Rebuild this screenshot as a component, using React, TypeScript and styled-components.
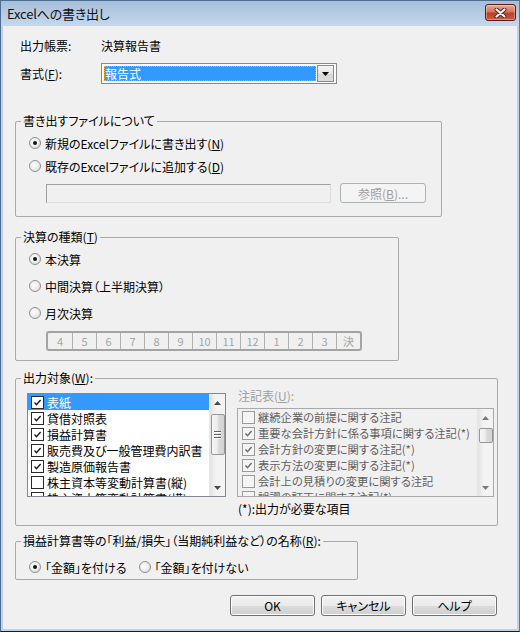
import styled, { createGlobalStyle } from "styled-components";

const GlobalStyle = createGlobalStyle`
  html, body {
    margin: 0;
    padding: 0;
    background: #fff;
  }
  body {
    font-family: "Noto Sans CJK JP", "Noto Sans", sans-serif;
    font-size: 12px;
    font-feature-settings: "palt";
    color: #000;
  }
  * {
    box-sizing: border-box;
  }
`;

const Window = styled.div`
  width: 520px;
  height: 632px;
  display: flex;
  flex-direction: column;
  background: #bcd2ea;
  border: 1px solid #4d6d92;
  border-right-color: #2a86d8;
  border-bottom-color: #0e1e30;
  padding: 0 2px 2px 2px;
`;

const TitleBar = styled.div`
  height: 25px;
  margin: 0 -2px;
  padding-left: 6px;
  display: flex;
  align-items: center;
  background: linear-gradient(#a7bed9, #c4d8ee);
`;

const TitleText = styled.span`
  font-size: 13px;
  color: #111;
  letter-spacing: -0.2px;
`;

const CloseButton = styled.div`
  width: 31px;
  height: 17px;
  margin: 3px 3px 0 auto;
  align-self: flex-start;
  border: 1px solid #5a1a14;
  border-radius: 3px;
  background: linear-gradient(#e9a898 0%, #d5735f 45%, #bf3f29 55%, #cb5a42 100%);
  box-shadow: inset 0 0 0 1px rgba(255, 255, 255, 0.35);
  display: flex;
  align-items: center;
  justify-content: center;
`;

const Content = styled.div`
  flex: 1;
  background: #f0f0f0;
  display: flex;
  flex-direction: column;
  padding: 9px 0 0 12px;
`;

const InfoRow = styled.div<{ $h: number; $gap?: number }>`
  display: grid;
  grid-template-columns: 81px auto;
  align-items: center;
  height: ${(p) => p.$h}px;
  margin-top: ${(p) => p.$gap ?? 0}px;
  padding-left: 5px;
`;

const Combo = styled.div`
  width: 236px;
  height: 21px;
  display: flex;
  gap: 1px;
  padding: 2px;
  background: #fff;
  border: 1px solid #8a8a8a;
`;

const ComboValue = styled.div`
  flex: 1;
  background: #3399ff;
  color: #fff;
  line-height: 15px;
  padding-left: 1px;
  outline: 1px dotted #f5a623;
  outline-offset: -1px;
`;

const ComboButton = styled.div`
  width: 17px;
  margin: -1px 0;
  border: 1px solid #8a8a8a;
  background: linear-gradient(#f7f7f7, #e4e4e4 50%, #d6d6d6 51%, #dcdcdc);
  display: flex;
  align-items: center;
  justify-content: center;
`;

const Group = styled.fieldset<{ $w: number; $gap: number }>`
  width: ${(p) => p.$w}px;
  margin: ${(p) => p.$gap}px 0 0 0;
  padding: 0;
  min-width: 0;
  border: 1px solid #a9a9a9;
  border-radius: 2px;
`;

const Legend = styled.legend<{ $disabled?: boolean }>`
  margin-left: 5px;
  padding: 0 2px;
  line-height: 16px;
  color: ${(p) => (p.$disabled ? "#a0a0a0" : "#000")};
`;

const GroupBody = styled.div<{ $pad: string }>`
  display: flex;
  flex-direction: column;
  padding: ${(p) => p.$pad};
`;

const RadioRow = styled.label<{ $h: number; $gap?: number }>`
  display: flex;
  align-items: center;
  gap: 4px;
  height: ${(p) => p.$h}px;
  margin-top: ${(p) => p.$gap ?? 0}px;
`;

const RadioInline = styled.div`
  display: flex;
  align-items: center;
  gap: 12px;
`;

const RadioCircle = styled.span<{ $checked?: boolean }>`
  width: 12px;
  height: 12px;
  flex: none;
  border-radius: 50%;
  border: 1px solid #8e8f8f;
  background: radial-gradient(circle at 40% 40%, #ffffff 0%, #ececec 50%, #d2d2d2 100%);
  display: flex;
  align-items: center;
  justify-content: center;
  &::after {
    content: "";
    width: 4px;
    height: 4px;
    border-radius: 50%;
    background: ${(p) => (p.$checked ? "#151515" : "transparent")};
  }
`;

const PathRow = styled.div`
  display: flex;
  align-items: center;
  gap: 9px;
  height: 20px;
  margin-top: 6px;
  padding-left: 17px;
`;

const PathInput = styled.div`
  width: 285px;
  height: 19px;
  background: #f0f0f0;
  border: 1px solid #a0a0a0;
  border-right-color: #dcdcdc;
  border-bottom-color: #dcdcdc;
`;

const PushButton = styled.button<{ $w: number; $h: number; $disabled?: boolean }>`
  width: ${(p) => p.$w}px;
  height: ${(p) => p.$h}px;
  padding: 0;
  font: inherit;
  font-feature-settings: "palt";
  border-radius: 3px;
  border: 1px solid ${(p) => (p.$disabled ? "#adb2b5" : "#707070")};
  color: ${(p) => (p.$disabled ? "#a0a0a0" : "#000")};
  background: ${(p) =>
    p.$disabled
      ? "#f4f4f4"
      : "linear-gradient(#f2f2f2 0%, #ebebeb 50%, #dddddd 51%, #cfcfcf 100%)"};
  box-shadow: inset 0 0 0 1px ${(p) => (p.$disabled ? "#f4f4f4" : "#fcfcfc")};
`;

const MonthBar = styled.div`
  display: flex;
  align-self: flex-start;
  height: 20px;
  margin: 7px 0 0 17px;
  border: 2px solid #a3a3a3;
  border-radius: 3px;
`;

const MonthCell = styled.div`
  width: 24px;
  display: flex;
  align-items: center;
  justify-content: center;
  color: #a5a5a5;
  font-size: 11px;
  & + & {
    border-left: 1px solid #b0b0b0;
  }
`;

const TargetBody = styled.div`
  display: flex;
  align-items: flex-start;
  gap: 11px;
  padding: 0 0 8px 11px;
`;

const ListBox = styled.div<{ $w: number; $h: number; $disabled?: boolean }>`
  width: ${(p) => p.$w}px;
  height: ${(p) => p.$h}px;
  display: flex;
  overflow: hidden;
  border: 1px solid ${(p) => (p.$disabled ? "#a9a9a9" : "#828790")};
  background: ${(p) => (p.$disabled ? "#f0f0f0" : "#fff")};
  font-size: ${(p) => (p.$disabled ? "11.3px" : "12px")};
`;

const ListItems = styled.div`
  flex: 1;
  min-width: 0;
  overflow: hidden;
`;

const ListItem = styled.div<{ $selected?: boolean; $disabled?: boolean; $pad: number }>`
  height: 16px;
  display: flex;
  align-items: center;
  gap: 3px;
  padding-left: ${(p) => p.$pad}px;
  white-space: nowrap;
  background: ${(p) => (p.$selected ? "#3399ff" : "transparent")};
  color: ${(p) => (p.$selected ? "#fff" : p.$disabled ? "#5f5f5f" : "#000")};
`;

const CheckBox = styled.span<{ $disabled?: boolean }>`
  width: 13px;
  height: 13px;
  flex: none;
  display: flex;
  align-items: center;
  justify-content: center;
  background: ${(p) => (p.$disabled ? "#f4f4f4" : "#fff")};
  border: 1px solid ${(p) => (p.$disabled ? "#9a9a9a" : "#2a2a2a")};
`;

const ScrollBar = styled.div`
  width: 16px;
  flex: none;
  display: flex;
  flex-direction: column;
  background: linear-gradient(to right, #e3e3e3, #f3f3f3 40%, #f3f3f3);
  border-left: 1px solid #e6e6e6;
`;

const ArrowBox = styled.div`
  height: 17px;
  flex: none;
  display: flex;
  align-items: center;
  justify-content: center;
`;

const Track = styled.div`
  flex: 1;
  display: flex;
  flex-direction: column;
  align-items: center;
`;

const Thumb = styled.div<{ $top: number; $h: number }>`
  margin-top: ${(p) => p.$top}px;
  height: ${(p) => p.$h}px;
  width: 14px;
  border: 1px solid #979797;
  border-radius: 2px;
  background: linear-gradient(to right, #f6f6f6, #ececec 45%, #dadada 55%, #d3d3d3);
  display: flex;
  flex-direction: column;
  align-items: center;
  justify-content: center;
  gap: 2px;
`;

const Grip = styled.span`
  width: 7px;
  height: 1px;
  background: #606060;
  box-shadow: 0 1px 0 #ffffff;
`;

const NoteColumn = styled.div`
  display: flex;
  flex-direction: column;
  padding-top: 2px;
`;

const NoteLabel = styled.div`
  line-height: 16px;
  padding-left: 1px;
  color: #a0a0a0;
`;

const NoteText = styled.div`
  line-height: 16px;
  margin-top: 4px;
  padding-left: 1px;
`;

const ButtonRow = styled.div`
  display: flex;
  justify-content: flex-end;
  gap: 6px;
  margin-top: 15px;
  padding-right: 20px;
`;

const Arrow = ({ up, color = "#4a4a4a" }: { up?: boolean; color?: string }) => (
  <svg width="7" height="4" viewBox="0 0 7 4">
    <polygon points={up ? "0,4 3.5,0 7,4" : "0,0 7,0 3.5,4"} fill={color} />
  </svg>
);

const Check = ({ color }: { color: string }) => (
  <svg width="9" height="9" viewBox="0 0 9 9">
    <path d="M1.5 4.5 L3.5 6.8 L7.6 2" fill="none" stroke={color} strokeWidth="1.4" />
  </svg>
);

const Radio = ({ checked, children, h = 22, gap }: { checked?: boolean; children: React.ReactNode; h?: number; gap?: number }) => (
  <RadioRow $h={h} $gap={gap}>
    <RadioCircle $checked={checked} />
    <span>{children}</span>
  </RadioRow>
);

const targets = [
  { name: "表紙", checked: true },
  { name: "貸借対照表", checked: true },
  { name: "損益計算書", checked: true },
  { name: "販売費及び一般管理費内訳書", checked: true },
  { name: "製造原価報告書", checked: true },
  { name: "株主資本等変動計算書(縦)", checked: false },
  { name: "株主資本等変動計算書(横)", checked: false },
];

const notes = [
  { name: "継続企業の前提に関する注記", checked: false },
  { name: "重要な会計方針に係る事項に関する注記(*)", checked: true },
  { name: "会計方針の変更に関する注記(*)", checked: true },
  { name: "表示方法の変更に関する注記(*)", checked: true },
  { name: "会計上の見積りの変更に関する注記", checked: false },
  { name: "誤謬の訂正に関する注記(*)", checked: false },
];

const months = ["4", "5", "6", "7", "8", "9", "10", "11", "12", "1", "2", "3", "決"];

const App = () => {
  return (
    <>
      <GlobalStyle />
      <Window>
        <TitleBar>
          <TitleText>Excelへの書き出し</TitleText>
          <CloseButton>
            <svg width="13" height="10" viewBox="0 0 13 10">
              <path d="M2.5 1.5 L10.5 8.5 M10.5 1.5 L2.5 8.5" stroke="#4a2520" strokeWidth="4" strokeLinecap="round" />
              <path d="M2.5 1.5 L10.5 8.5 M10.5 1.5 L2.5 8.5" stroke="#f4f4f4" strokeWidth="2.2" strokeLinecap="round" />
            </svg>
          </CloseButton>
        </TitleBar>
        <Content>
          <InfoRow $h={20}>
            <span>出力帳票:</span>
            <span>決算報告書</span>
          </InfoRow>
          <InfoRow $h={21} $gap={8}>
            <span>
              書式(<u>F</u>):
            </span>
            <Combo>
              <ComboValue>報告式</ComboValue>
              <ComboButton>
                <Arrow color="#000" />
              </ComboButton>
            </Combo>
          </InfoRow>

          <Group $w={427} $gap={29}>
            <Legend>書き出すファイルについて</Legend>
            <GroupBody $pad="3px 0 13px 13px">
              <Radio checked>
                新規のExcelファイルに書き出す(<u>N</u>)
              </Radio>
              <Radio gap={1}>
                既存のExcelファイルに追加する(<u>D</u>)
              </Radio>
              <PathRow>
                <PathInput />
                <PushButton $w={86} $h={20} $disabled>
                  参照(<u>B</u>)...
                </PushButton>
              </PathRow>
            </GroupBody>
          </Group>

          <Group $w={384} $gap={12}>
            <Legend>
              決算の種類(<u>T</u>)
            </Legend>
            <GroupBody $pad="3px 0 9px 13px">
              <Radio checked>本決算</Radio>
              <Radio gap={5}>中間決算（上半期決算）</Radio>
              <Radio gap={5}>月次決算</Radio>
              <MonthBar>
                {months.map((m) => (
                  <MonthCell key={m}>{m}</MonthCell>
                ))}
              </MonthBar>
            </GroupBody>
          </Group>

          <Group $w={483} $gap={9}>
            <Legend>
              出力対象(<u>W</u>):
            </Legend>
            <TargetBody>
              <ListBox $w={199} $h={104} style={{ marginTop: 7 }}>
                <ListItems>
                  {targets.map((t, i) => (
                    <ListItem key={t.name} $pad={3} $selected={i === 0}>
                      <CheckBox>{t.checked && <Check color="#1c1c1c" />}</CheckBox>
                      <span>{t.name}</span>
                    </ListItem>
                  ))}
                </ListItems>
                <ScrollBar>
                  <ArrowBox>
                    <Arrow up />
                  </ArrowBox>
                  <Track>
                    <Thumb $top={3} $h={41}>
                      <Grip />
                      <Grip />
                      <Grip />
                    </Thumb>
                  </Track>
                  <ArrowBox>
                    <Arrow />
                  </ArrowBox>
                </ScrollBar>
              </ListBox>
              <NoteColumn>
                <NoteLabel>
                  注記表(<u>U</u>):
                </NoteLabel>
                <ListBox $w={257} $h={89} $disabled style={{ marginTop: 4 }}>
                  <ListItems>
                    {notes.map((n) => (
                      <ListItem key={n.name} $pad={4} $disabled>
                        <CheckBox $disabled>{n.checked && <Check color="#6a6a6a" />}</CheckBox>
                        <span>{n.name}</span>
                      </ListItem>
                    ))}
                  </ListItems>
                  <ScrollBar>
                    <ArrowBox>
                      <Arrow up color="#7a7a7a" />
                    </ArrowBox>
                    <Track>
                      <Thumb $top={2} $h={15} />
                    </Track>
                    <ArrowBox>
                      <Arrow color="#7a7a7a" />
                    </ArrowBox>
                  </ScrollBar>
                </ListBox>
                <NoteText>(*):出力が必要な項目</NoteText>
              </NoteColumn>
            </TargetBody>
          </Group>

          <Group $w={343} $gap={7}>
            <Legend>
              損益計算書等の「利益/損失」（当期純利益など）の名称(<u>R</u>):
            </Legend>
            <GroupBody $pad="8px 0 2px 13px">
              <RadioInline>
                <Radio checked h={20}>
                  「金額」を付ける
                </Radio>
                <Radio h={20}>「金額」を付けない</Radio>
              </RadioInline>
            </GroupBody>
          </Group>

          <ButtonRow>
            <PushButton $w={85} $h={21}>OK</PushButton>
            <PushButton $w={85} $h={21}>キャンセル</PushButton>
            <PushButton $w={85} $h={21}>ヘルプ</PushButton>
          </ButtonRow>
        </Content>
      </Window>
    </>
  );
};

export default App;
